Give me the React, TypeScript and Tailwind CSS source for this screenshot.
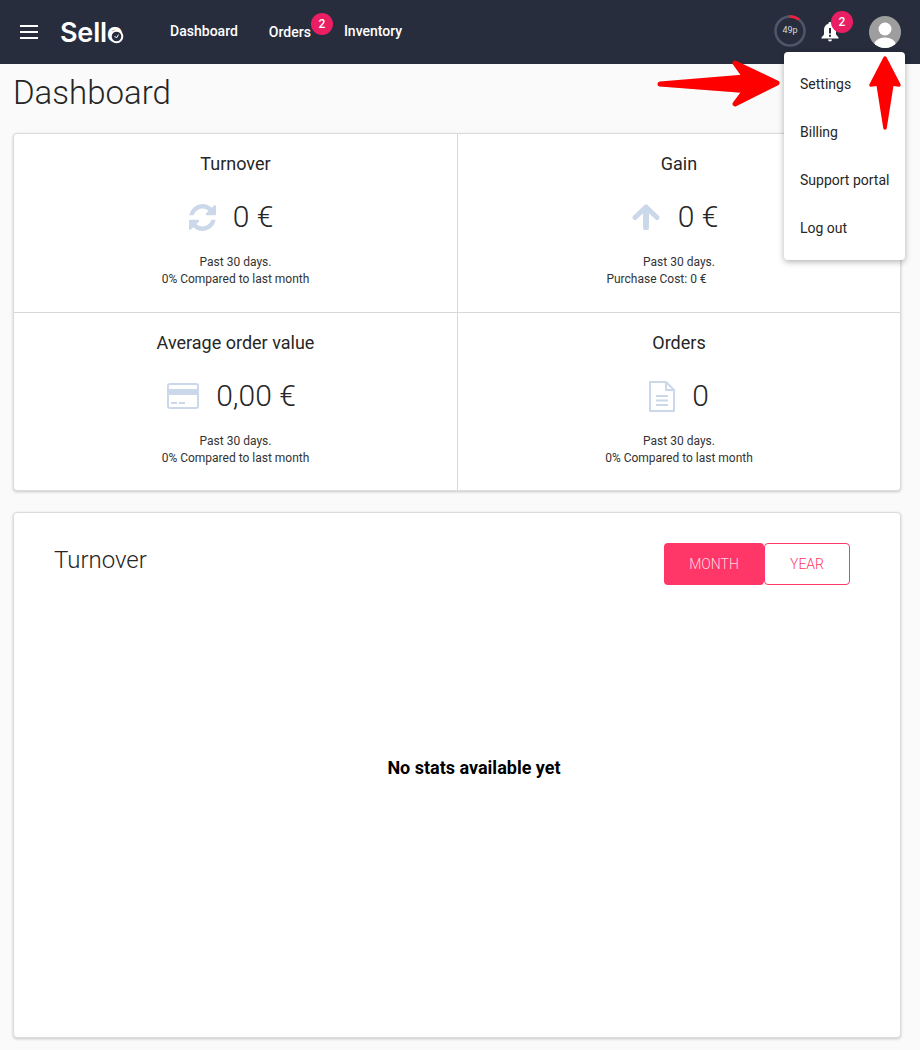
import React from "react";

const F = "font-['Roboto',sans-serif]";

function RefreshIcon() {
  return (
    <svg width="27" height="27" viewBox="0 0 1536 1536" fill="#cbd8ea">
      <path d="M1511 928q0 5-1 7-64 268-268 434.500t-478 166.500q-146 0-282.500-55t-243.500-157l-129 129q-19 19-45 19t-45-19-19-45v-448q0-26 19-45t45-19h448q26 0 45 19t19 45-19 45l-137 137q71 66 161 102t187 36q134 0 250-65t186-179q11-17 53-117 8-23 30-23h192q13 0 22.500 9.500t9.500 22.500zm25-800v448q0 26-19 45t-45 19h-448q-26 0-45-19t-19-45 19-45l138-138q-148-137-349-137-134 0-250 65t-186 179q-11 17-53 117-8 23-30 23h-199q-13 0-22.500-9.500t-9.500-22.500v-7q65-268 270-434.500t480-166.500q146 0 284 55.500t245 156.500l130-129q19-19 45-19t45 19 19 45z" />
    </svg>
  );
}

function UpIcon() {
  return (
    <svg width="28" height="26" viewBox="0 0 28 26" fill="none" stroke="#cbd8ea" strokeLinecap="round" strokeLinejoin="round">
      <path d="M14 23.500V4" strokeWidth="6" />
      <path d="M3 13.500L14 3l11 10.500" strokeWidth="5" />
    </svg>
  );
}

function CardIcon() {
  return (
    <svg width="32" height="26" viewBox="0 0 32 26">
      <rect x="1" y="1" width="30" height="24" rx="2" fill="none" stroke="#cbd8ea" strokeWidth="2" />
      <rect x="1" y="6" width="30" height="6" fill="#cbd8ea" />
      <rect x="4" y="19" width="6" height="2" fill="#cbd8ea" />
      <rect x="12" y="19" width="6" height="2" fill="#cbd8ea" />
    </svg>
  );
}

function DocIcon() {
  return (
    <svg width="26" height="31" viewBox="0 0 26 31" fill="none" stroke="#cbd8ea" strokeWidth="2">
      <path d="M1 1h16l8 8v21H1z" strokeLinejoin="round" />
      <path d="M17 1v8h8" strokeLinejoin="round" />
      <path d="M7 15h12M7 19.500h12M7 24h12" />
    </svg>
  );
}

function Stat({ title, icon, value, gap, lines, border, rowClass, lastClass }: { title: string; icon: React.ReactNode; value: string; gap: string; lines: string[]; border: string; rowClass?: string; lastClass?: string }) {
  return (
    <div className={`flex h-[179px] flex-col items-center pt-[17px] ${border}`}>
      <div className="text-[18px] leading-[26px] text-[#262626]">{title}</div>
      <div className={`mt-[20px] flex h-[40px] items-center ${gap} ${rowClass ?? ""}`}>
        {icon}
        <span className="text-[30px] font-light leading-[40px] text-[#262626]">{value}</span>
      </div>
      <div className="mt-[17px] flex flex-col items-center text-[12px] leading-[17px] text-[#333333]">
        {lines.map((l, i) => (
          <div key={l} className={i === lines.length - 1 ? lastClass : undefined}>{l}</div>
        ))}
      </div>
    </div>
  );
}

function Badge({ children, className }: { children: React.ReactNode; className: string }) {
  return (
    <span className={`absolute flex h-[22px] w-[22px] items-center justify-center rounded-full bg-[#e91e63] text-[12px] font-medium text-white ${className}`}>
      {children}
    </span>
  );
}

export default function App() {
  return (
    <div className={`${F} relative h-[1050px] w-[920px] overflow-hidden bg-[#fafafa]`}>
      <header className="flex h-[64px] items-center bg-[#272d3d] pl-[20px] text-white">
        <div className="flex w-[18px] flex-col gap-[4px]">
          <span className="h-[2px] bg-white" />
          <span className="h-[2px] bg-white" />
          <span className="h-[2px] bg-white" />
        </div>
        <div className="relative ml-[22px] mt-[2px] font-['Inter',sans-serif] text-[27px] font-semibold leading-[32px] tracking-[-0.2px]">
          Sello
          <svg className="absolute -right-[1px] top-[12px]" width="15" height="15" viewBox="0 0 15 15" fill="#272d3d" stroke="#ffffff">
            <circle cx="7.500" cy="7.500" r="5.800" strokeWidth="2" />
            <path d="M5.500 7l2 2 2-3.500" fill="none" strokeWidth="1" />
          </svg>
        </div>
        <nav className="ml-[47px] flex items-center text-[14px] font-medium">
          <span className="-mt-[2px]">Dashboard</span>
          <span className="relative ml-[31px]">
            Orders
            <Badge className="-top-[9px] -right-[22px]">2</Badge>
          </span>
          <span className="-mt-[2px] ml-[33px]">Inventory</span>
        </nav>
        <div className="ml-auto flex items-center pr-[19px]">
          <div className="relative -mt-[2px] flex h-[32px] w-[32px] items-center justify-center">
            <svg className="absolute inset-0" width="32" height="32" viewBox="0 0 32 32" fill="none" strokeWidth="2.500">
              <circle cx="16" cy="16" r="14.500" stroke="#505668" />
              <path d="M15 1.500A14.500 14.500 0 0 1 25 4.600" stroke="#f0203c" />
            </svg>
            <span className="text-[9px] text-[#d8dade]">49p</span>
          </div>
          <div className="relative ml-[14px] flex h-[20px] w-[20px] items-center justify-center">
            <svg width="18" height="20" viewBox="0 0 18 20" fill="#ffffff">
              <path d="M9 0a1.500 1.500 0 0 1 1.500 1.700C13.400 2.400 15 4.800 15 8v4.500l2.500 3v1H.500v-1l2.500-3V8c0-3.200 1.600-5.600 4.500-6.300A1.500 1.500 0 0 1 9 0z" />
              <path d="M7 17.500h4a2 2 0 0 1-4 0z" />
              <rect x="8" y="6" width="2" height="5.500" fill="#272d3d" />
              <rect x="8" y="12.800" width="2" height="2" fill="#272d3d" />
            </svg>
            <Badge className="-top-[11px] -right-[13px]">2</Badge>
          </div>
          <div className="ml-[29px] h-[32px] w-[32px] overflow-hidden rounded-full bg-[#9e9e9e]">
            <svg width="32" height="32" viewBox="0 0 32 32" fill="#ffffff">
              <circle cx="16" cy="13" r="6.500" />
              <ellipse cx="16" cy="28" rx="10.500" ry="6.500" />
            </svg>
          </div>
        </div>
      </header>

      <main className="px-[13px]">
        <h1 className="mt-[8px] text-[33px] font-light leading-[42px] text-[#262626]">Dashboard</h1>

        <section className="mt-[19px] grid h-[358px] w-[888px] grid-cols-[444px_1fr] rounded-[4px] border border-[#dcdcdc] bg-white shadow-[0_1px_3px_rgba(0,0,0,0.2)]">
          <Stat title="Turnover" icon={<RefreshIcon />} value="0 €" gap="gap-[17px]" rowClass="pr-[9px]" border="border-r border-b border-[#d8d8d8]" lines={["Past 30 days.", "0% Compared to last month"]} />
          <Stat title="Gain" icon={<UpIcon />} value="0 €" gap="gap-[18px]" rowClass="pr-[8px]" border="border-b border-[#d8d8d8]" lastClass="mr-[45px]" lines={["Past 30 days.", "Purchase Cost: 0 €"]} />
          <Stat title="Average order value" icon={<CardIcon />} value="0,00 €" gap="gap-[17px]" rowClass="pr-[8px]" border="border-r border-[#d8d8d8]" lines={["Past 30 days.", "0% Compared to last month"]} />
          <Stat title="Orders" icon={<DocIcon />} value="0" gap="gap-[17px]" border="" lines={["Past 30 days.", "0% Compared to last month"]} />
        </section>

        <section className="mt-[21px] h-[526px] w-[888px] rounded-[4px] border border-[#dcdcdc] bg-white px-[40px] pt-[30px] shadow-[0_1px_3px_rgba(0,0,0,0.2)]">
          <div className="flex items-start justify-between pr-[10px]">
            <h2 className="mt-[1px] text-[24px] font-light leading-[32px] text-[#262626]">Turnover</h2>
            <div className="flex">
              <button className="h-[42px] w-[100px] rounded-[4px] bg-[#ff3668] text-[14px] font-light text-[#ffd6e0]">MONTH</button>
              <button className="h-[42px] w-[86px] rounded-[4px] border border-[#ff3668] bg-white text-[14px] font-light text-[#ff3668]">YEAR</button>
            </div>
          </div>
          <div className="mt-[171px] pl-[34px] text-center text-[18px] font-bold leading-[24px] text-black">No stats available yet</div>
        </section>
      </main>

      <div className="absolute left-[784px] top-[52px] w-[121px] rounded-[4px] bg-white py-[8px] text-[14px] text-[#262626] shadow-[0_2px_6px_rgba(0,0,0,0.3)]">
        {["Settings", "Billing", "Support portal", "Log out"].map((t) => (
          <div key={t} className="flex h-[48px] items-center whitespace-nowrap pl-[16px]">{t}</div>
        ))}
      </div>

      <svg className="pointer-events-none absolute left-0 top-0" width="920" height="1050" viewBox="0 0 920 1050">
        <path d="M659 85.500L742 92L735 106" stroke="#000000" strokeOpacity="0.2" strokeWidth="1.500" fill="none" />
        <path d="M660 84L745 77L735 63L777 83L735 104L745 90.500Z" fill="#ff0000" stroke="#ff0000" strokeWidth="5" strokeLinejoin="round" />
        <path d="M885 58L899 85L892 84L885 128L878 84L871 85Z" fill="#ff0000" stroke="#ff0000" strokeWidth="3.500" strokeLinejoin="round" />
      </svg>
    </div>
  );
}
